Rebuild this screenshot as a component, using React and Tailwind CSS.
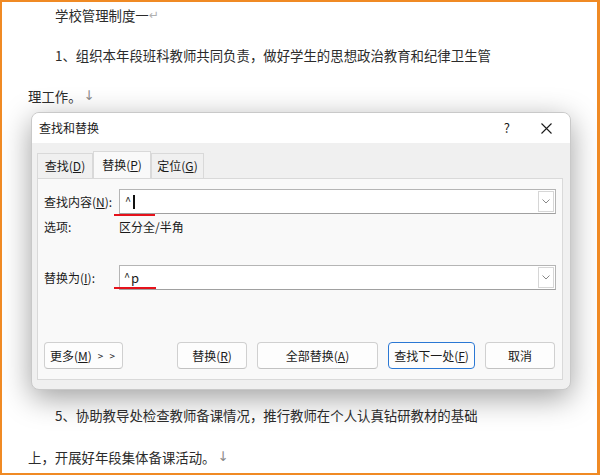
import React from 'react'

const docFont = { fontFamily: '"Noto Sans CJK SC", "Noto Sans", sans-serif' }
const arrowFont = { fontFamily: '"DejaVu Sans", sans-serif' }

function Chevron() {
  return (
    <svg width="8" height="5" viewBox="0 0 8 5" fill="none">
      <path d="M0.5 0.5 L4 4 L7.5 0.5" stroke="#7a7a7a" strokeWidth="0.9" />
    </svg>
  )
}

function ComboInput({ children, mark }) {
  return (
    <div className="relative flex-1 h-[25px] bg-white border border-[#b5b5b5] border-b-[#a0a0a0] flex items-center">
      <div className="flex-1 pl-[4px] flex items-center text-[12px] text-[#1a1a1a]">{children}</div>
      <div className="h-[21px] w-[16px] mr-[1px] border border-[#d6d6d6] bg-white flex items-center justify-center">
        <Chevron />
      </div>
      {mark}
    </div>
  )
}

function Btn({ children, w, primary }) {
  return (
    <button
      className={
        'h-[27px] rounded-[4px] bg-[#fdfdfd] text-[12px] text-[#1a1a1a] flex items-center justify-center ' +
        (primary ? 'border border-[#2b78d4]' : 'border border-[#d0d0d0] border-b-[#c2c2c2]')
      }
      style={{ width: w }}
    >
      {children}
    </button>
  )
}

function Tab({ children, active, w }) {
  return (
    <div
      className={
        active
          ? 'h-[27px] -mb-px bg-[#f9f9f9] border border-b-0 border-[#d9d9d9] flex items-center justify-center text-[12px] text-[#1a1a1a] z-10'
          : 'h-[25px] mt-[2px] bg-[#f0f0f0] border border-b-0 border-[#d9d9d9] flex items-center justify-center text-[12px] text-[#1a1a1a]'
      }
      style={{ width: w }}
    >
      {children}
    </div>
  )
}

function Dialog() {
  return (
    <div className="ml-[29px] w-[540px] h-[278px] rounded-[8px] border border-[#c9c9c9] bg-[#f0f0f0] shadow-[0_8px_30px_rgba(0,0,0,0.38)] flex flex-col overflow-hidden">
      {/* Title bar */}
      <div className="h-[30px] bg-white flex items-center pl-[7px] text-[12px] text-[#1a1a1a]">
        <span>查找和替换</span>
        <span className="ml-auto mr-[31px] text-[13px]">?</span>
        <svg className="mr-[18px]" width="11" height="11" viewBox="0 0 11 11">
          <path d="M0.5 0.5 L10.5 10.5 M10.5 0.5 L0.5 10.5" stroke="#1a1a1a" strokeWidth="1.1" />
        </svg>
      </div>

      <div className="flex-1 pl-[5px] pr-[7px] pt-[8px] pb-[9px] flex flex-col">
        {/* Tabs */}
        <div className="flex items-start h-[27px]">
          <Tab w={56}>查找(<u>D</u>)</Tab>
          <Tab w={58} active>替换(<u>P</u>)</Tab>
          <Tab w={53}>定位(<u>G</u>)</Tab>
        </div>

        {/* Panel */}
        <div className="flex-1 bg-[#f9f9f9] border border-[#d9d9d9] pl-[6px] pr-[6px] pt-[10px] flex flex-col text-[12px] text-[#1a1a1a]">
          <div className="flex items-center h-[25px]">
            <div className="w-[75px]">查找内容(<u>N</u>):</div>
            <ComboInput
              mark={<div className="absolute left-[-6px] top-[24px] w-[41px] h-[2px] bg-[#e5121b]" />}
            >
              <span className="text-[11px] -mt-[3px] ml-[1px]">^</span>
              <span className="ml-[2px] w-[1.5px] h-[14px] bg-[#111]" />
            </ComboInput>
          </div>

          <div className="flex items-center h-[16px] mt-[5px]">
            <div className="w-[75px]">选项:</div>
            <div>区分全/半角</div>
          </div>

          <div className="flex items-center h-[25px] mt-[30px]">
            <div className="w-[75px]">替换为(<u>I</u>):</div>
            <ComboInput
              mark={<div className="absolute left-[-6px] top-[21px] w-[42px] h-[2px] bg-[#e5121b]" />}
            >
              <span className="text-[11px] -mt-[3px]">^</span>
              <span className="text-[13px] ml-[1px]">p</span>
            </ComboInput>
          </div>

          <div className="flex items-center h-[27px] mt-[52px]">
            <Btn w={79}>
              更多(<u>M</u>)<span className="ml-[6px] text-[10px] tracking-[2px]">&gt; &gt;</span>
            </Btn>
            <div className="ml-auto flex gap-[10px]">
              <Btn w={70}>替换(<u>R</u>)</Btn>
              <Btn w={121}>全部替换(<u>A</u>)</Btn>
              <Btn w={87} primary>查找下一处(<u>F</u>)</Btn>
              <Btn w={70}>取消</Btn>
            </div>
            <div className="w-[1px]" />
          </div>
        </div>
      </div>
    </div>
  )
}

export default function App() {
  return (
    <div
      className="w-[600px] h-[475px] border-2 border-r-[3px] border-[#f08a24] bg-white overflow-hidden"
      style={docFont}
    >
      <div className="-mt-[7px] text-[13.4px] text-[#2b2b2b]">
        <div className="h-[40px] flex items-center pl-[26px]">
          <span className="pl-[27px]">学校管理制度一</span>
          <span className="text-[#b0b0b0] text-[12px]" style={arrowFont}>↵</span>
        </div>
        <div className="h-[40px] flex items-center pl-[53px]">
          1、组织本年段班科教师共同负责，做好学生的思想政治教育和纪律卫生管
        </div>
        <div className="h-[42px] flex items-center pl-[26px]">
          理工作。<span className="text-[#8a8a8a] ml-[2px]" style={arrowFont}>↓</span>
        </div>
      </div>

      <div className="-mt-[5px]">
        <Dialog />
      </div>

      <div className="mt-[4px] text-[13.4px] text-[#2b2b2b]">
        <div className="h-[42px] flex items-center pl-[53px]">
          5、协助教导处检查教师备课情况，推行教师在个人认真钻研教材的基础
        </div>
        <div className="h-[42px] flex items-center pl-[26px]">
          上，开展好年段集体备课活动。<span className="text-[#8a8a8a] ml-[2px]" style={arrowFont}>↓</span>
        </div>
      </div>
    </div>
  )
}
